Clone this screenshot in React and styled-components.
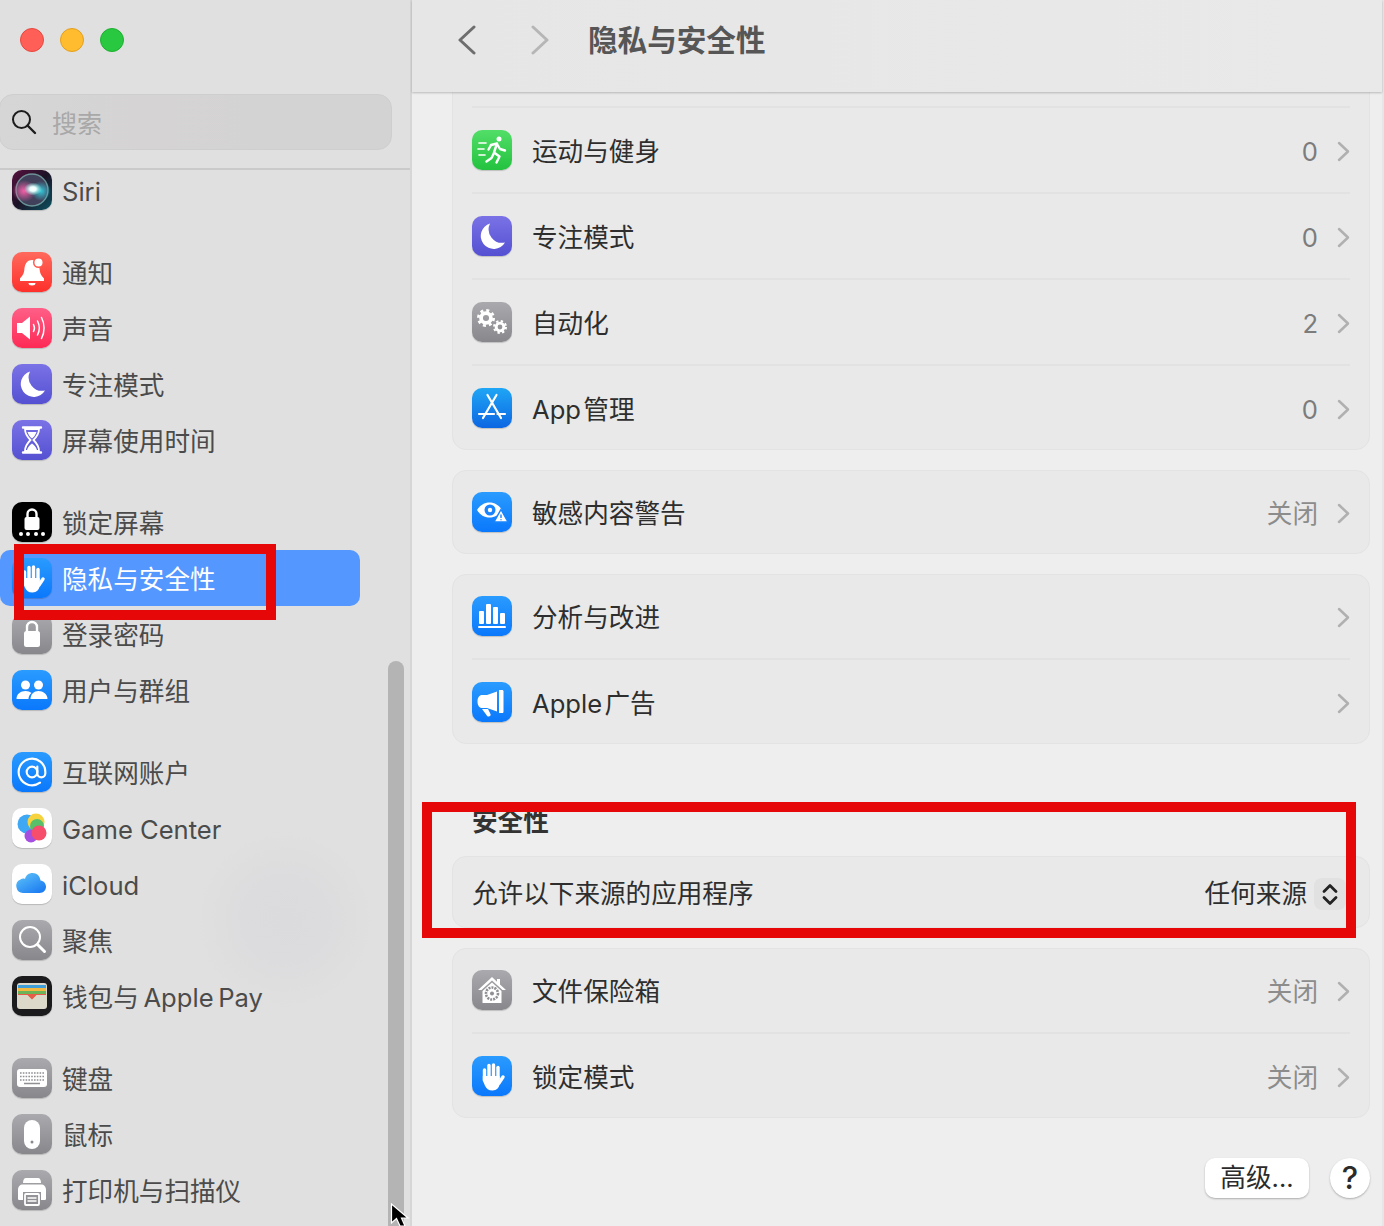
import styled, { createGlobalStyle } from "styled-components";
import { AtSign } from "lucide-react";

const GlobalStyle = createGlobalStyle`
  html, body {
    margin: 0;
    padding: 0;
    background: #ececec;
  }
  body {
    font-family: Inter, "Noto Sans CJK SC", sans-serif;
    overflow: hidden;
  }
  * {
    box-sizing: border-box;
  }
`;

const Window = styled.div`
  position: relative;
  display: flex;
  width: 1384px;
  height: 1226px;
  overflow: hidden;
`;

/* ---------- sidebar ---------- */

const Sidebar = styled.aside`
  display: flex;
  flex-direction: column;
  flex: 0 0 412px;
  border-right: 2px solid #d6d6d6;
  background: radial-gradient(circle 90px at 285px 920px, #dbdbdd 0%, #dcdcde 45%, rgba(224, 224, 224, 0) 100%), #e0e0e0;
`;

const TitleBar = styled.div`
  display: flex;
  align-items: center;
  gap: 16px;
  height: 80px;
  padding-left: 20px;
`;

const Light = styled.span`
  width: 24px;
  height: 24px;
  border-radius: 50%;
  background: ${(p) => p.$color};
  border: 1px solid ${(p) => p.$edge};
`;

const SearchArea = styled.div`
  height: 90px;
  padding-top: 14px;
  border-bottom: 2px solid #cacaca;
`;

const SearchBox = styled.div`
  display: flex;
  align-items: center;
  gap: 15px;
  width: 393px;
  height: 56px;
  margin-left: -1px;
  padding-left: 11px;
  border: 1px solid #cecece;
  border-radius: 14px;
  background: linear-gradient(90deg, #d6d6d6, #d5d3d3 40%, #d3d3d3);
  color: #a8a8a8;
  font-size: 25px;
`;

const SideList = styled.nav`
  flex: 1;
  display: flex;
  flex-direction: column;
  gap: 26px;
  overflow: hidden;
  padding-right: 50px;
`;

const SideGroup = styled.div`
  display: flex;
  flex-direction: column;
  &:first-child {
    margin-top: -8px;
  }
`;

const SideRow = styled.div`
  display: flex;
  flex: 0 0 56px;
  align-items: center;
  gap: 10px;
  height: 56px;
  padding-left: 12px;
  border-radius: 10px;
  background: ${(p) => (p.$active ? "#5497ff" : "transparent")};
  color: ${(p) => (p.$active ? "#fff" : "#4b4b4b")};
  font-size: 25.6px;
  white-space: nowrap;
`;

const SideLabel = styled.span`
  padding-top: 3px;
  line-height: 36px;
`;

const Scrollbar = styled.div`
  position: absolute;
  left: 388px;
  top: 661px;
  width: 16px;
  height: 600px;
  border-radius: 8px;
  background: #b4b4b4;
`;

/* ---------- icon tile ---------- */

const Tile = styled.span`
  display: flex;
  flex: 0 0 40px;
  align-items: center;
  justify-content: center;
  width: 40px;
  height: 40px;
  border-radius: 10px;
  background: ${(p) => p.$bg};
  box-shadow: 0 1px 1px rgba(0, 0, 0, 0.18);
  overflow: hidden;
  svg {
    display: block;
  }
`;

const BLUE = "linear-gradient(180deg, #2a9bff, #0a78fb)";
const GRAY = "linear-gradient(180deg, #a9a9ae, #87878c)";

const Svg = ({ children }) => (
  <svg width="40" height="40" viewBox="0 0 40 40" fill="none">
    {children}
  </svg>
);

const HandGlyph = () => (
  <Svg>
    <g stroke="#fff" strokeWidth="3.400" strokeLinecap="round">
      <path d="M12.500 14v10" />
      <path d="M17 9.500v12" />
      <path d="M21.500 9v12" />
      <path d="M26 11.500v11" />
      <path d="M27 27l4-6" />
    </g>
    <path d="M10.800 20h16.900v7c0 4.500-3.200 7.500-7.200 7.500-4 0-6.300-2-7.600-5l-2.100-5z" fill="#fff" />
  </Svg>
);

const MoonGlyph = () => (
  <Svg>
    <path d="M18 7.500A13 13 0 1 0 33 26.500 13.500 13.500 0 0 1 18 7.500z" fill="#fff" />
  </Svg>
);

const GearGlyph = ({ x, y, r }) => (
  <g>
    <circle cx={x} cy={y} r={r * 0.55} stroke="#fff" strokeWidth={r * 0.42} />
    <circle
      cx={x}
      cy={y}
      r={r * 0.85}
      stroke="#fff"
      strokeWidth={r * 0.3}
      strokeDasharray={`${r * 0.334} ${r * 0.334}`}
    />
  </g>
);

const icons = {
  siri: (
    <Tile $bg="linear-gradient(135deg, #5a1240, #1b1226 50%, #0b5260)">
      <Svg>
        <defs>
          <radialGradient id="siriCore">
            <stop offset="0" stopColor="#fff" />
            <stop offset="0.35" stopColor="#eaffff" />
            <stop offset="1" stopColor="#8fe" stopOpacity="0" />
          </radialGradient>
          <radialGradient id="siriPink">
            <stop offset="0" stopColor="#f45fa8" />
            <stop offset="1" stopColor="#f45fa8" stopOpacity="0" />
          </radialGradient>
          <radialGradient id="siriTeal">
            <stop offset="0" stopColor="#35c6d8" />
            <stop offset="1" stopColor="#35c6d8" stopOpacity="0" />
          </radialGradient>
        </defs>
        <circle cx="20" cy="20" r="16" fill="#40405a" />
        <circle cx="20" cy="20" r="16" stroke="#8fd6cc" strokeOpacity="0.6" strokeWidth="1.400" />
        <ellipse cx="12" cy="21" rx="12" ry="11" fill="url(#siriPink)" />
        <ellipse cx="29" cy="21" rx="10" ry="10" fill="url(#siriTeal)" />
        <ellipse cx="21" cy="19" rx="9" ry="6.500" fill="url(#siriCore)" />
      </Svg>
    </Tile>
  ),
  bell: (
    <Tile $bg="linear-gradient(180deg, #ff6a5c, #fe2f2b)">
      <Svg>
        <path d="M20 8c-5.500 0-7.200 4.500-7.700 10-.4 4.600-2.800 6.500-4.300 8.500V29h24v-2.500c-1.500-2-3.900-3.900-4.300-8.500C27.200 12.500 25.500 8 20 8z" fill="#fff" />
        <path d="M16.500 31h7a3.500 2.500 0 0 1-7 0z" fill="#fff" />
        <circle cx="26.500" cy="10.500" r="5.500" fill="#fe5b50" />
        <circle cx="26.500" cy="10.500" r="4" fill="#fff" />
      </Svg>
    </Tile>
  ),
  sound: (
    <Tile $bg="linear-gradient(180deg, #ff5f87, #fd2a55)">
      <Svg>
        <path d="M5 15h5l8-6.500v23L10 25H5z" fill="#fff" />
        <g stroke="#fff" strokeWidth="1.500" strokeLinecap="round">
          <path d="M21.500 16.500c1.200 2.200 1.200 4.800 0 7" />
          <path d="M25.500 13c2.200 4.200 2.200 9.800 0 14" />
          <path d="M29.500 9.500c3.400 6.200 3.400 14.800 0 21" />
        </g>
      </Svg>
    </Tile>
  ),
  focus: (
    <Tile $bg="linear-gradient(180deg, #7a72e6, #5450d2)">
      <MoonGlyph />
    </Tile>
  ),
  screenTime: (
    <Tile $bg="linear-gradient(180deg, #7a72e6, #5450d2)">
      <Svg>
        <path d="M11 7.500h18M11 32.500h18" stroke="#fff" strokeWidth="2.400" strokeLinecap="round" />
        <path d="M13 9h14c0 5-2.500 8-5.500 11 3 3 5.500 6 5.500 11H13c0-5 2.500-8 5.500-11C15.500 17 13 14 13 9z" stroke="#fff" strokeWidth="1.800" />
        <path d="M15.500 12h9c-.8 2.500-2.500 5-4.500 6.500-2-1.500-3.700-4-4.500-6.500zM15 30c.8-3 2.800-5 5-6.500 2.200 1.500 4.200 3.500 5 6.500z" fill="#fff" />
      </Svg>
    </Tile>
  ),
  lockScreen: (
    <Tile $bg="#000">
      <Svg>
        <path d="M15.500 16v-4a4.500 4.500 0 0 1 9 0v4" stroke="#fff" strokeWidth="2.400" />
        <rect x="12.500" y="15" width="15" height="13" rx="2" fill="#fff" />
        <g fill="#fff">
          <circle cx="9" cy="32" r="2" />
          <circle cx="16" cy="32" r="2" />
          <circle cx="24" cy="32" r="2" />
          <circle cx="31" cy="32" r="2" />
        </g>
      </Svg>
    </Tile>
  ),
  hand: (
    <Tile $bg={BLUE}>
      <HandGlyph />
    </Tile>
  ),
  password: (
    <Tile $bg={GRAY}>
      <Svg>
        <path d="M15 18v-5a5 5 0 0 1 10 0v5" stroke="#fff" strokeWidth="2.400" />
        <rect x="12" y="17" width="16" height="16" rx="2.500" fill="#fff" />
      </Svg>
    </Tile>
  ),
  users: (
    <Tile $bg={BLUE}>
      <Svg>
        <circle cx="13.500" cy="15" r="4.500" fill="#fff" />
        <circle cx="26.500" cy="15" r="4.500" fill="#fff" />
        <path d="M4.500 29c0-5 4-8 9-8 2.500 0 4.500.7 6 2-2 1.500-3 3.500-3 6z" fill="#fff" />
        <path d="M18.500 29c0-5 3.500-8 8-8s9 3 9 8z" fill="#fff" />
      </Svg>
    </Tile>
  ),
  at: (
    <Tile $bg={BLUE}>
      <AtSign size={32} color="#fff" strokeWidth={1.600} />
    </Tile>
  ),
  gameCenter: (
    <Tile $bg="#fff">
      <Svg>
        <circle cx="15" cy="16" r="9.500" fill="#3fa8f5" />
        <circle cx="24" cy="14" r="8.500" fill="#f6d23f" />
        <circle cx="25" cy="18" r="7" fill="#57c06a" />
        <circle cx="19" cy="28" r="6.500" fill="#a44fe0" />
        <circle cx="27" cy="25" r="7.500" fill="#f64d6d" />
      </Svg>
    </Tile>
  ),
  icloud: (
    <Tile $bg="#fff">
      <Svg>
        <defs>
          <linearGradient id="cloudFill" x1="0" y1="0" x2="0.800" y2="1">
            <stop offset="0" stopColor="#62c6f8" />
            <stop offset="1" stopColor="#1b7bf2" />
          </linearGradient>
        </defs>
        <path d="M11 29a7 7 0 0 1-2.500-13.400C10 14.300 12 14.500 13 15c1-4 4-6 7.500-6 4.500 0 7.500 3 8 7.500 3.200.4 5.500 3 5.500 6.300 0 3.500-2.800 6.200-6.300 6.200z" fill="url(#cloudFill)" />
      </Svg>
    </Tile>
  ),
  spotlight: (
    <Tile $bg={GRAY}>
      <Svg>
        <circle cx="18" cy="17" r="10" stroke="#fff" strokeWidth="2" />
        <path d="M25.500 24.500l7 7" stroke="#fff" strokeWidth="3" strokeLinecap="round" />
      </Svg>
    </Tile>
  ),
  wallet: (
    <Tile $bg="#1b1b1d">
      <Svg>
        <rect x="5" y="7" width="30" height="26" rx="3" fill="#dcd8ca" />
        <path d="M6 9h28v3H6z" fill="#3f9fd8" />
        <path d="M6 12h28v3H6z" fill="#f2b840" />
        <path d="M6 15h28v3H6z" fill="#6db358" />
        <path d="M6 18h10l4 4 4-4h10v1H24.500l-4.500 4.500L15.500 19H6z" fill="#e85d48" />
        <path d="M15 18h10l-5 5z" fill="#e85d48" />
      </Svg>
    </Tile>
  ),
  keyboard: (
    <Tile $bg={GRAY}>
      <Svg>
        <rect x="5" y="11" width="30" height="18" rx="3" fill="#fff" />
        <path d="M8 15h24M8 18.500h24M8 22h24" stroke="#8f8f94" strokeWidth="1.600" strokeDasharray="1.600 1.200" />
        <path d="M12 25.500h16" stroke="#8f8f94" strokeWidth="1.600" />
      </Svg>
    </Tile>
  ),
  mouse: (
    <Tile $bg={GRAY}>
      <Svg>
        <rect x="12" y="6" width="16" height="29" rx="8" fill="#fff" />
        <circle cx="20" cy="28" r="1.500" fill="#8a8a8f" />
      </Svg>
    </Tile>
  ),
  printer: (
    <Tile $bg={GRAY}>
      <Svg>
        <path d="M11 13c0-3 1-5 3-5h12c2 0 3 2 3 5z" fill="#fff" />
        <path d="M6 20c0-3.500 2-5.500 5-5.500h18c3 0 5 2 5 5.500v8.500c0 1-.6 1.500-1.500 1.500H29v-8H11v8H7.500C6.600 30 6 29.500 6 28.500z" fill="#fff" />
        <rect x="13" y="24" width="14" height="11" rx="1" stroke="#fff" strokeWidth="1.800" />
        <path d="M15.500 28h9M15.500 31h9" stroke="#fff" strokeWidth="1.400" />
      </Svg>
    </Tile>
  ),
  fitness: (
    <Tile $bg="linear-gradient(180deg, #52de68, #23c23f)">
      <Svg>
        <circle cx="27" cy="9" r="2.500" fill="#fff" />
        <g stroke="#fff" strokeWidth="2.400" strokeLinecap="round" strokeLinejoin="round">
          <path d="M19 15l6-1.500-3 9 5.500 4-3 6" />
          <path d="M25 14l3 5 5 1.500" />
          <path d="M19 15l-2.500 4.500" />
          <path d="M22 23l-2.500 5-5 3.500" />
        </g>
        <g stroke="#fff" strokeWidth="1.600" strokeLinecap="round">
          <path d="M7 13h7" />
          <path d="M6 19h6" />
          <path d="M7 25h6" />
        </g>
      </Svg>
    </Tile>
  ),
  automation: (
    <Tile $bg={GRAY}>
      <Svg>
        <GearGlyph x={14} y={16} r={9} />
        <GearGlyph x={28} y={25} r={7} />
      </Svg>
    </Tile>
  ),
  appStore: (
    <Tile $bg="linear-gradient(180deg, #1fa6f5, #0c66e2)">
      <Svg>
        <g stroke="#fff" strokeWidth="2.200" strokeLinecap="round">
          <path d="M24.500 7L11 30" />
          <path d="M15.500 7L29 30" />
          <path d="M7 26h15" />
          <path d="M25.500 26h7.500" />
        </g>
      </Svg>
    </Tile>
  ),
  eye: (
    <Tile $bg={BLUE}>
      <Svg>
        <path d="M5 18c3-5 7.500-7.500 12.500-7.500S27 13 30 18c-3 5-7.500 7.500-12.500 7.500S8 23 5 18z" fill="#fff" />
        <circle cx="18" cy="18" r="5.500" fill="#1a84fc" />
        <circle cx="18" cy="18" r="2.200" fill="#fff" />
        <path d="M29 17.500l7 12.500H22z" fill="#fff" stroke="#1a84fc" strokeWidth="1.500" />
        <path d="M29 22.500v3.500M29 27.300v1" stroke="#1a84fc" strokeWidth="1.400" />
      </Svg>
    </Tile>
  ),
  analytics: (
    <Tile $bg={BLUE}>
      <Svg>
        <g fill="#fff">
          <rect x="7" y="15" width="5" height="13" rx="1" />
          <rect x="14" y="8" width="5" height="20" rx="1" />
          <rect x="21" y="11" width="5" height="17" rx="1" />
          <rect x="28" y="17" width="5" height="11" rx="1" />
          <rect x="6" y="30" width="28" height="2" rx="1" />
        </g>
      </Svg>
    </Tile>
  ),
  ads: (
    <Tile $bg={BLUE}>
      <Svg>
        <path d="M27 8h3c1 0 1.500.6 1.500 1.500v20c0 1-.5 1.500-1.500 1.500h-3z" fill="#fff" />
        <path d="M25 9.500v20L15 26h-5c-2.500 0-4.500-2.500-4.500-6.500S7.500 13 10 13h5z" fill="#fff" />
        <path d="M10 27h6l2.500 5c.5 1.300-.4 2.500-1.800 2.500-1 0-1.700-.5-2.200-1.500z" fill="#fff" />
      </Svg>
    </Tile>
  ),
  vault: (
    <Tile $bg={GRAY}>
      <Svg>
        <path d="M20 7L6 20h3.500L20 10.500 30.500 20H34L28 14.500V9h-3v2.700z" fill="#fff" />
        <path d="M10.500 21L20 12.500 29.500 21v12h-19z" fill="#fff" />
        <circle cx="20" cy="23.500" r="6" stroke="#8f8f94" strokeWidth="2.600" strokeDasharray="2 1" />
        <circle cx="20" cy="23.500" r="2" fill="#8f8f94" />
      </Svg>
    </Tile>
  ),
};

/* ---------- main pane ---------- */

const Main = styled.main`
  flex: 1;
  display: flex;
  flex-direction: column;
  min-width: 0;
  border-right: 2px solid #e6e6e6;
  background: #eeeeee;
`;

const Header = styled.header`
  position: relative;
  z-index: 2;
  display: flex;
  flex: 0 0 92px;
  align-items: center;
  height: 92px;
  padding: 0 0 12px 45px;
  background: linear-gradient(90deg, #e7e6e6, #e9e9e9);
  box-shadow: 0 1px 2px rgba(0, 0, 0, 0.22);
`;

const NavButton = styled.span`
  display: flex;
  align-items: center;
  justify-content: center;
  width: 20px;
  margin-right: ${(p) => p.$gap}px;
  color: ${(p) => p.$color};
`;

const Title = styled.h1`
  margin: 0;
  color: #565656;
  font-size: 29.6px;
  font-weight: 700;
  line-height: 40px;
`;

const Content = styled.div`
  flex: 1;
  display: flex;
  flex-direction: column;
  gap: 20px;
  overflow: hidden;
  padding: 0 12px 0 40px;
`;

const Card = styled.section`
  flex: none;
  border: 1px solid #e3e3e3;
  border-radius: 14px;
  background: #e9e9e9;
  &:first-child {
    margin-top: -70px;
  }
`;

const Row = styled.div`
  display: flex;
  align-items: center;
  height: 86px;
  margin: 0 19px;
  border-top: 2px solid #e2e2e2;
  color: #2e2e2e;
  font-size: 25.6px;
  line-height: 36px;
  &:first-child {
    height: 83px;
    padding-bottom: 1px;
    border-top: 0;
  }
  &:last-child {
    height: 85px;
    padding-top: 1px;
  }
  &:first-child:last-child {
    height: ${(p) => (p.$short ? 70 : 82)}px;
    padding: 0;
  }
`;

const RowIcon = styled.span`
  margin-right: 20px;
`;

const RowLabel = styled.span`
  flex: 1;
  padding-top: 3px;
`;

const RowValue = styled.span`
  padding-top: 3px;
  color: ${(p) => (p.$muted ? "#8c8c8c" : "#7c7c7c")};
`;

const RowChevron = styled.span`
  display: flex;
  margin: 2px 0 0 19px;
  color: #b0b0b0;
`;

const PopupValue = styled.span`
  padding-top: 3px;
  color: #2e2e2e;
`;

const Stepper = styled.span`
  display: flex;
  align-items: center;
  justify-content: center;
  width: 32px;
  height: 32px;
  margin: 4px 4px 0 7px;
  border-radius: 8px;
  background: #e1e1e1;
`;

const SectionTitle = styled.h2`
  margin: 40px 0 -4px;
  padding-left: 20px;
  color: #333;
  font-size: 25.6px;
  font-weight: 700;
  line-height: 36px;
`;

const Footer = styled.div`
  display: flex;
  justify-content: flex-end;
  gap: 21px;
  margin-top: 20px;
`;

const PushButton = styled.button`
  width: ${(p) => (p.$round ? 40 : 104)}px;
  height: 40px;
  padding: 0;
  border: 0;
  border-radius: ${(p) => (p.$round ? "50%" : "10px")};
  background: #fff;
  box-shadow: 0 1px 2px rgba(0, 0, 0, 0.28);
  color: #2b2b2b;
  font-family: inherit;
  font-size: ${(p) => (p.$round ? 31 : 25.6)}px;
  font-weight: ${(p) => (p.$round ? 500 : 400)};
  line-height: 40px;
`;

/* ---------- overlays ---------- */

const Highlight = styled.div`
  position: absolute;
  left: ${(p) => p.$x}px;
  top: ${(p) => p.$y}px;
  width: ${(p) => p.$w}px;
  height: ${(p) => p.$h}px;
  border: 10px solid #e60808;
  z-index: 5;
`;

const Cursor = styled.svg`
  position: absolute;
  left: 388px;
  top: 1200px;
  z-index: 6;
`;

const Chevron = ({ dir = "right", w = 13, h = 21, stroke = 2.500 }) => (
  <svg width={w} height={h} viewBox={`0 0 ${w} ${h}`} fill="none">
    <path
      d={
        dir === "right"
          ? `M2 2L${w - 2} ${h / 2}L2 ${h - 2}`
          : `M${w - 2} 2L2 ${h / 2}L${w - 2} ${h - 2}`
      }
      stroke="currentColor"
      strokeWidth={stroke}
      strokeLinecap="round"
      strokeLinejoin="round"
    />
  </svg>
);

const sideGroups = [
  [{ icon: "siri", label: "Siri" }],
  [
    { icon: "bell", label: "通知" },
    { icon: "sound", label: "声音" },
    { icon: "focus", label: "专注模式" },
    { icon: "screenTime", label: "屏幕使用时间" },
  ],
  [
    { icon: "lockScreen", label: "锁定屏幕" },
    { icon: "hand", label: "隐私与安全性", active: true },
    { icon: "password", label: "登录密码" },
    { icon: "users", label: "用户与群组" },
  ],
  [
    { icon: "at", label: "互联网账户" },
    { icon: "gameCenter", label: "Game Center" },
    { icon: "icloud", label: "iCloud" },
    { icon: "spotlight", label: "聚焦" },
    { icon: "wallet", label: "钱包与\u2009Apple\u2009Pay" },
  ],
  [
    { icon: "keyboard", label: "键盘" },
    { icon: "mouse", label: "鼠标" },
    { icon: "printer", label: "打印机与扫描仪" },
  ],
];

function SettingRow({ icon, label, value, muted }) {
  return (
    <Row>
      <RowIcon>{icons[icon]}</RowIcon>
      <RowLabel>{label}</RowLabel>
      {value && <RowValue $muted={muted}>{value}</RowValue>}
      <RowChevron>
        <Chevron />
      </RowChevron>
    </Row>
  );
}

export default function App() {
  return (
    <>
      <GlobalStyle />
      <Window>
        <Sidebar>
          <TitleBar>
            <Light $color="#ff5f57" $edge="#e5483f" />
            <Light $color="#febc2e" $edge="#e3a020" />
            <Light $color="#28c840" $edge="#1fb032" />
          </TitleBar>
          <SearchArea>
            <SearchBox>
              <svg width="26" height="26" viewBox="0 0 26 26" fill="none">
                <circle cx="10.500" cy="10.500" r="8.500" stroke="#1d1d1d" strokeWidth="2" />
                <path d="M16.500 16.500L24 24" stroke="#1d1d1d" strokeWidth="2.400" strokeLinecap="round" />
              </svg>
              搜索
            </SearchBox>
          </SearchArea>
          <SideList>
            {sideGroups.map((group) => (
              <SideGroup key={group[0].label}>
                {group.map((item) => (
                  <SideRow key={item.label} $active={item.active}>
                    {icons[item.icon]}
                    <SideLabel>{item.label}</SideLabel>
                  </SideRow>
                ))}
              </SideGroup>
            ))}
          </SideList>
        </Sidebar>
        <Scrollbar />

        <Main>
          <Header>
            <NavButton $gap={53} $color="#6e6e6e">
              <Chevron dir="left" w={18} h={30} stroke={3} />
            </NavButton>
            <NavButton $gap={38} $color="#b6b6b6">
              <Chevron w={18} h={30} stroke={3} />
            </NavButton>
            <Title>隐私与安全性</Title>
          </Header>
          <Content>
            <Card>
              <Row />
              <SettingRow icon="fitness" label="运动与健身" value="0" />
              <SettingRow icon="focus" label="专注模式" value="0" />
              <SettingRow icon="automation" label="自动化" value="2" />
              <SettingRow icon="appStore" label={"App\u200a管理"} value="0" />
            </Card>
            <Card>
              <SettingRow icon="eye" label="敏感内容警告" value="关闭" muted />
            </Card>
            <Card>
              <SettingRow icon="analytics" label="分析与改进" />
              <SettingRow icon="ads" label={"Apple\u200a广告"} />
            </Card>
            <SectionTitle>安全性</SectionTitle>
            <Card>
              <Row $short>
                <RowLabel>允许以下来源的应用程序</RowLabel>
                <PopupValue>任何来源</PopupValue>
                <Stepper>
                  <svg width="18" height="24" viewBox="0 0 18 24" fill="none">
                    <path d="M3 9.500l6-6 6 6M3 15.500l6 6 6-6" stroke="#222" strokeWidth="2.800" strokeLinecap="round" strokeLinejoin="round" />
                  </svg>
                </Stepper>
              </Row>
            </Card>
            <Card>
              <SettingRow icon="vault" label="文件保险箱" value="关闭" muted />
              <SettingRow icon="hand" label="锁定模式" value="关闭" muted />
            </Card>
            <Footer>
              <PushButton>高级...</PushButton>
              <PushButton $round>?</PushButton>
            </Footer>
          </Content>
        </Main>

        <Highlight $x={14} $y={544} $w={262} $h={76} />
        <Highlight $x={422} $y={802} $w={934} $h={136} />
        <Cursor width="26" height="26" viewBox="0 0 26 26">
          <path d="M3.500 4v19l5-4.500 3.500 7.500h5l-3.500-8H20z" fill="#000" stroke="#fff" strokeWidth="1.200" />
        </Cursor>
      </Window>
    </>
  );
}
